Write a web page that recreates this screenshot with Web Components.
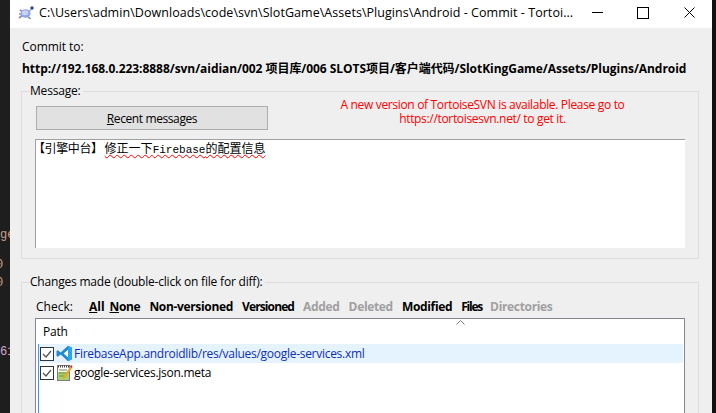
<!DOCTYPE html>
<html>
<head>
<meta charset="utf-8">
<title>Commit</title>
<style>
html,body{margin:0;padding:0;width:716px;height:413px;overflow:hidden;background:#1e1e1e}
body{font-family:"Open Sans","Noto Sans CJK SC",sans-serif;font-size:12px;color:#000}
</style>
</head>
<body>
<svn-desktop>
  <svn-dialog>
    <svn-titlebar slot="title">C:\Users\admin\Downloads\code\svn\SlotGame\Assets\Plugins\Android - Commit - Tortoi...</svn-titlebar>
    <svn-commit-target slot="target" url="http://192.168.0.223:8888/svn/aidian/002 项目库/006 SLOTS项目/客户端代码/SlotKingGame/Assets/Plugins/Android"></svn-commit-target>
    <svn-group label="Message:" style="height:176px;margin-bottom:15px">
      <svn-message-head>
        <svn-button>Recent messages</svn-button>
        <span slot="notice">A new version of TortoiseSVN is available. Please go to<br>https://tortoisesvn.net/ to get it.</span>
      </svn-message-head>
      <svn-logbox prefix="【引擎中台】" text="修正一下"></svn-logbox>
    </svn-group>
    <svn-group label="Changes made (double-click on file for diff):" style="height:170px">
      <svn-filter></svn-filter>
      <svn-filelist></svn-filelist>
    </svn-group>
  </svn-dialog>
</svn-desktop>
<script>
// build a shadow root from a css + html pair
function mount(el, css, html){
  el.attachShadow({mode:'open'}).innerHTML = `<style>${css}</style>${html}`;
}

class SvnDesktop extends HTMLElement{
  connectedCallback(){
    mount(this, `
:host{display:grid;grid-template-columns:10px 702px 4px;width:716px;height:413px;overflow:hidden}
.edge{position:relative;background:#1e1e1e;overflow:hidden;font:12px "Liberation Mono",monospace}
.edge span{position:absolute;white-space:nowrap;line-height:14px}
.right{background:#111}`, `
<div class="edge">
  <span style="top:228px;left:0;color:#c9a08a">ge</span>
  <span style="top:258px;left:-4px;color:#c9a08a">0</span>
  <span style="top:276px;left:-4px;color:#c9a08a">0</span>
  <span style="top:345px;left:0;color:#d9a9c9">61</span>
</div>
<slot></slot>
<div class="edge right"></div>`);
  }
}

class SvnDialog extends HTMLElement{
  connectedCallback(){
    mount(this, `
:host{display:flex;flex-direction:column;background:#efefef;height:413px;overflow:hidden}
.body{display:flex;flex-direction:column;padding:0 13px 0 11px}`, `
<slot name="title"></slot>
<div class="body"><slot name="target"></slot><slot></slot></div>`);
  }
}

class SvnTitlebar extends HTMLElement{
  connectedCallback(){
    mount(this, `
:host{display:flex;align-items:center;height:28px;box-sizing:border-box;padding-bottom:3px;background:#fff;flex:none}
.icon{width:16px;height:16px;margin:0 5px 0 8px;flex:none}
.text{flex:1;white-space:nowrap;font-size:12.5px;letter-spacing:.05px;overflow:hidden}
.btns{display:flex;flex:none}
.btn{width:46px;height:24px;display:flex;align-items:center;justify-content:center}
.btn svg{display:block}`, `
<svg class="icon" viewBox="0 0 16 16">
  <path d="M1 13l4-3M12.500 14l-3-3M2 5l3 2M1 9h3" stroke="#8a8f96" stroke-width="1.700" fill="none"/>
  <ellipse cx="7.500" cy="8.500" rx="5" ry="4.200" fill="#8fa6e8"/>
  <ellipse cx="7" cy="7.800" rx="3.200" ry="2.500" fill="#c6d3f5"/>
  <path d="M11 6.500l2-2" stroke="#9aa0aa" stroke-width="1.200"/>
  <circle cx="14" cy="3" r="1.700" fill="#27408f"/>
</svg>
<div class="text"><slot></slot></div>
<div class="btns">
  <div class="btn"><svg width="11" height="11"><path d="M0 5.500h11" stroke="#000"/></svg></div>
  <div class="btn"><svg width="12" height="12"><rect x=".5" y=".5" width="11" height="11" fill="none" stroke="#000"/></svg></div>
  <div class="btn"><svg width="11" height="11"><path d="M.5.5l10 10M10.500.5l-10 10" stroke="#000" fill="none"/></svg></div>
</div>`);
  }
}

class SvnCommitTarget extends HTMLElement{
  connectedCallback(){
    mount(this, `
:host{display:block;padding:12px 0 0 1px;height:55px;box-sizing:border-box;flex:none}
.l{line-height:14px;letter-spacing:-.05px}
.u{font-weight:700;line-height:16px;margin-top:7px;white-space:nowrap;letter-spacing:-.05px}`, `
<div class="l">Commit to:</div>
<div class="u">${this.getAttribute('url')}</div>`);
  }
}

class SvnGroup extends HTMLElement{
  connectedCallback(){
    mount(this, `
:host{display:block;flex:none;box-sizing:border-box}
fieldset{margin:0;height:100%;box-sizing:border-box;border:1px solid #dcdcdc;padding:7px 13px 0 13px;min-width:0}
legend{padding:0 3px 0 0;margin-left:-5px;line-height:16px;white-space:nowrap;letter-spacing:-.2px}`, `
<fieldset><legend>${this.getAttribute('label')}</legend><slot></slot></fieldset>`);
  }
}

class SvnMessageHead extends HTMLElement{
  connectedCallback(){
    mount(this, `
:host{display:grid;grid-template-columns:233px 1fr;height:33px;align-items:start}
.notice{color:#f00;text-align:center;line-height:14px;margin-top:-8px;padding-left:12px;letter-spacing:-.33px;white-space:nowrap}`, `
<slot></slot><div class="notice"><slot name="notice"></slot></div>`);
  }
}

class SvnButton extends HTMLElement{
  connectedCallback(){
    mount(this, `
:host{display:flex;align-items:center;justify-content:center;height:24px;box-sizing:border-box;background:#e1e1e1;border:1px solid #adadad;margin-left:1px;letter-spacing:-.4px}
u{text-decoration:underline}`, `
<div><u>R</u>ecent messages</div>`);
  }
}

class SvnLogbox extends HTMLElement{
  connectedCallback(){
    mount(this, `
:host{display:block;height:109px;background:#fff;border-top:1px solid #a0a0a0;border-left:1px solid #a0a0a0;box-sizing:border-box;padding:0 0 0 1px;font:12px/15px "Noto Sans CJK SC",monospace;white-space:nowrap;color:#000}
.m{font-family:"Liberation Mono","Noto Sans CJK SC",monospace;font-size:11px}
.w{text-decoration:underline wavy #f00 1px;text-underline-offset:1px}
.p{margin-left:-4px;letter-spacing:-.4px;margin-right:2px}`, `
<span class="p">${this.getAttribute('prefix')}</span><span class="w">${this.getAttribute('text')}<span class="m">Firebase</span>的配置信息</span>`);
  }
}

class SvnFilter extends HTMLElement{
  connectedCallback(){
    // label, underlined first letter, enabled, gap to the next label
    const items=[['All',1,1,5],['None',1,1,9],['Non-versioned',0,1,9],['Versioned',0,1,9],['Added',0,0,9],['Deleted',0,0,9],['Modified',0,1,9],['Files',0,1,8],['Directories',0,0,0]];
    mount(this, `
:host{display:flex;align-items:center;height:16px;margin-top:1px;white-space:nowrap}
.c{width:53px;flex:none;margin-left:1px}
.links{display:flex;letter-spacing:-.33px}
b.off{color:#a0a0a0}
.n{width:max-content}
u{text-decoration:underline}`, `
<span class="c">Check:</span><div class="links">` + items.map(([t,ul,on,gap],i)=>{
      const label = ul ? `<u>${t[0]}</u>${t.slice(1)}` : t;
      const fix = {0:{ls:.3},1:{ls:0},3:{ls:-.55},7:{ls:-.9}}[i];
      return `<b class="${on?'':'off'}" style="margin-right:${gap}px${fix&&fix.ls?`;letter-spacing:${fix.ls-.33}px`:''}">${label}</b>`;
    }).join('') + `</div>`);
  }
}

class SvnFilelist extends HTMLElement{
  connectedCallback(){
    const check = `<svg class="ck" width="14" height="14" viewBox="0 0 14 14"><rect x=".5" y=".5" width="13" height="13" fill="#fff" stroke="#333"/><path d="M3 7l3 3 5-6" fill="none" stroke="#555" stroke-width="1.300"/></svg>`;
    const vscode = `<svg class="ic" width="17" height="17" viewBox="0 0 17 17"><path d="M12 .8L16 2.700v11.600L12 16.200 4.700 9.600 1.900 11.700.5 11V6l1.400-.7 2.800 2.100z" fill="#1f8ad2"/><path d="M12 .8L16 2.700v11.600L12 16.200z" fill="#2aa6ee"/><path d="M12 4.800L7.600 8.500 12 12.200z" fill="#fff"/></svg>`;
    const note = `<svg class="ic" width="17" height="17" viewBox="0 0 17 17"><rect x="1.500" y="1.500" width="12" height="15" fill="#fff" stroke="#7d7d7d"/><path d="M2 2.500h11" stroke="#444" stroke-dasharray="1 1" stroke-width="2"/><rect x="2" y="8" width="11" height="8" fill="#a9d36a"/><path d="M3 6h8M3 9h8M3 12h5" stroke="#6f8f48"/><path d="M7 13L14 3l2 1-7 10-2.500 1z" fill="#e9a52b"/><path d="M14 3l2 1 .5-2-1.500-1z" fill="#c9302c"/></svg>`;
    mount(this, `
:host{display:block;margin-top:4px;height:150px;box-sizing:border-box;border:1px solid #828790;background:#fff;position:relative}
.head{height:25px;line-height:25px;padding-left:7px;letter-spacing:-.2px}
.sort{position:absolute;left:420px;top:1px}
.rows{border-left:1px solid #3f9be8;margin-left:2px;padding-right:1px;height:120px}
.row{display:flex;align-items:center;height:19px;white-space:nowrap;letter-spacing:-.28px}
.row.sel{background:#e5f3ff;color:#0d2fb8}
.ck{margin-left:1px;flex:none}
.ic{margin:0 1px 0 2px;flex:none}`, `
<div class="head">Path</div>
<svg class="sort" width="9" height="5"><path d="M.5 4.500l4-4 4 4" fill="none" stroke="#7a7a7a"/></svg>
<div class="rows">
  <div class="row sel">${check}${vscode}<span>FirebaseApp.androidlib/res/values/google-services.xml</span></div>
  <div class="row">${check}${note}<span>google-services.json.meta</span></div>
</div>`);
  }
}

customElements.define('svn-desktop', SvnDesktop);
customElements.define('svn-dialog', SvnDialog);
customElements.define('svn-titlebar', SvnTitlebar);
customElements.define('svn-commit-target', SvnCommitTarget);
customElements.define('svn-group', SvnGroup);
customElements.define('svn-message-head', SvnMessageHead);
customElements.define('svn-button', SvnButton);
customElements.define('svn-logbox', SvnLogbox);
customElements.define('svn-filter', SvnFilter);
customElements.define('svn-filelist', SvnFilelist);
</script>
</body>
</html>
